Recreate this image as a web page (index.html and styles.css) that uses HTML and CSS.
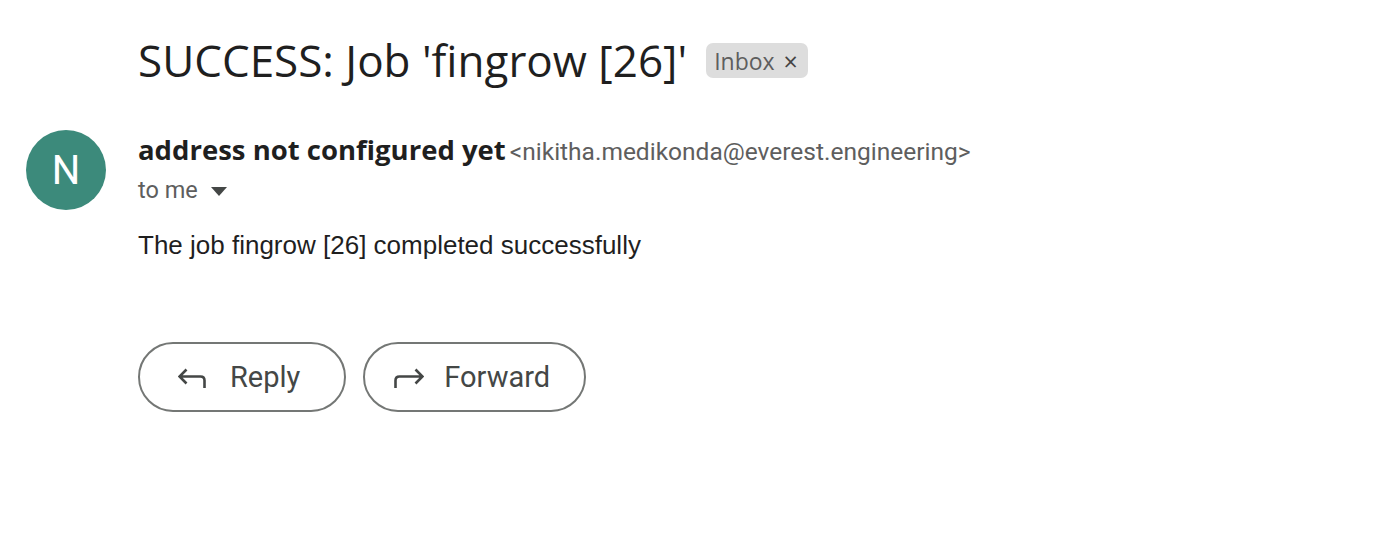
FILE: index.html
```html
<!DOCTYPE html>
<html>
<head>
<meta charset="utf-8">
<link rel="stylesheet" href="styles.css">
</head>
<body>
<div class="mail">
  <div class="subject-row">
    <h1 class="subject">SUCCESS: Job 'fingrow [26]'</h1>
    <span class="chip">Inbox <span class="chip-x">×</span></span>
  </div>
  <div class="message">
    <div class="avatar">N</div>
    <div class="content">
      <div class="from"><span class="name">address not configured yet</span> <span class="addr">&lt;nikitha.medikonda@everest.engineering&gt;</span></div>
      <div class="to">to me <svg class="caret" width="16" height="9" viewBox="0 0 16 9"><path d="M0 0h16L8 9z" fill="#444746"/></svg></div>
      <div class="body">The job fingrow [26] completed successfully</div>
      <div class="actions">
        <button class="btn btn-reply"><svg class="ico" width="28" height="24" viewBox="0 0 28 24"><path d="M26.5 23v-7.5q0-4-4-4H2.5M8.5 4.5L1.5 11.5l7 7" fill="none" stroke="#444746" stroke-width="2.6"/></svg><span>Reply</span></button>
        <button class="btn btn-forward"><svg class="ico" width="30" height="24" viewBox="0 0 30 24"><path d="M1.5 23v-7.5q0-4 4-4h22M21.5 4.5l7 7-7 7" fill="none" stroke="#444746" stroke-width="2.6"/></svg><span>Forward</span></button>
      </div>
    </div>
  </div>
</div>
</body>
</html>
```
FILE: styles.css
```css
html, body {
  margin: 0;
  padding: 0;
  background: #fff;
}
.mail {
  padding: 36px 0 0 26px;
}
.subject-row {
  display: flex;
  align-items: center;
  margin-left: 112px;
  gap: 19px;
}
.subject {
  margin: 0;
  font-family: "Open Sans", sans-serif;
  font-weight: 400;
  font-size: 44px;
  line-height: 48px;
  color: #1f1f1f;
  letter-spacing: 0;
}
.chip {
  display: inline-flex;
  align-items: center;
  gap: 9px;
  background: #dddddd;
  color: #5e5e5e;
  border-radius: 7px;
  height: 35px;
  padding: 0 10px 0 8px;
  font-family: "Open Sans", sans-serif;
  font-size: 23px;
  box-sizing: border-box;
  margin-top: 1px;
}
.chip-x {
  font-size: 25px;
  color: #444;
}
.message {
  display: flex;
  margin-top: 46px;
  gap: 32px;
}
.avatar {
  width: 80px;
  height: 80px;
  border-radius: 50%;
  background: #3c8a7b;
  color: #fff;
  font-family: "Roboto", sans-serif;
  font-size: 40px;
  display: flex;
  align-items: center;
  justify-content: center;
  flex: none;
}
.content {
  display: flex;
  flex-direction: column;
}
.from {
  font-family: "Roboto", sans-serif;
  line-height: 40px;
  white-space: nowrap;
}
.name {
  font-family: "Open Sans", sans-serif;
  font-weight: 700;
  font-size: 27.5px;
  color: #1f1f1f;
}
.addr {
  font-size: 24.5px;
  color: #5e5e5e;
}
.to {
  font-family: "Roboto", sans-serif;
  font-size: 23.5px;
  color: #5e5e5e;
  line-height: 30px;
  display: flex;
  align-items: center;
  gap: 13px;
}
.caret {
  margin-top: 2px;
}
.body {
  margin-top: 25px;
  font-family: "Liberation Sans", Arial, sans-serif;
  font-size: 26px;
  line-height: 30px;
  color: #1f1f1f;
}
.actions {
  display: flex;
  gap: 17px;
  margin-top: 82px;
}
.btn {
  display: flex;
  align-items: center;
  gap: 24px;
  height: 70px;
  border: 2px solid #747775;
  border-radius: 35px;
  background: #fff;
  font-family: "Roboto", sans-serif;
  font-size: 29px;
  color: #444746;
  box-sizing: border-box;
}
.btn-reply {
  padding: 0 44px 0 38px;
}
.btn-forward {
  gap: 20px;
  padding: 0 34px 0 29px;
}
.ico {
  flex: none;
}
```
